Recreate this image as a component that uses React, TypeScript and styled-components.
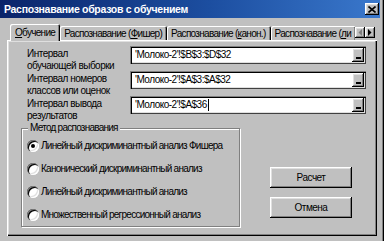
import React from 'react';
import styled, { createGlobalStyle } from 'styled-components';

const FACE = '#c0c0c0';

const GlobalStyle = createGlobalStyle`
  html, body {
    margin: 0;
    padding: 0;
    background: ${FACE};
  }
  body {
    font-family: "Liberation Sans", Arial, sans-serif;
    font-size: 10px;
    letter-spacing: -0.5px;
    color: #000;
  }
  * {
    box-sizing: border-box;
  }
`;

const raised = `
  box-shadow: inset -1px -1px #000, inset 1px 1px #fff, inset -2px -2px #808080, inset 2px 2px #dfdfdf;
`;

const Window = styled.div`
  width: 384px;
  height: 241px;
  overflow: hidden;
  display: flex;
  flex-direction: column;
  padding-right: 4px;
  background: ${FACE};
  box-shadow: inset -1px 0 #000, inset -2px 0 #808080;
`;

const TitleBar = styled.div`
  flex: none;
  height: 18px;
  display: flex;
  align-items: center;
  justify-content: space-between;
  padding: 0 1px 0 4px;
  background: linear-gradient(90deg, #0a246a 0%, #1c4ea0 55%, #3a78cc 100%);
`;

const Title = styled.span`
  color: #fff;
  font-weight: bold;
  font-size: 10.5px;
  letter-spacing: -0.3px;
`;

const CloseButton = styled.div`
  width: 14px;
  height: 12px;
  display: flex;
  align-items: center;
  justify-content: center;
  background: ${FACE};
  ${raised}
`;

const Body = styled.div`
  flex: 1;
  display: flex;
  flex-direction: column;
  padding: 6px 3px 5px 7px;
`;

const TabStrip = styled.div`
  flex: none;
  height: 17px;
  display: flex;
  align-items: flex-start;
  position: relative;
  z-index: 1;
`;

const TabList = styled.div`
  flex: 1;
  height: 17px;
  display: flex;
  align-items: flex-end;
  overflow: hidden;
  padding-left: 3px;
  letter-spacing: -0.7px;
`;

const Tab = styled.div<{ $active?: boolean }>`
  flex: none;
  height: ${({ $active }) => ($active ? '17px' : '14px')};
  margin-bottom: ${({ $active }) => ($active ? '0' : '1px')};
  padding: ${({ $active }) => ($active ? '0 5px 0 5px' : '1px 5px 0 4px')};
  display: flex;
  align-items: center;
  white-space: nowrap;
  background: ${FACE};
  border-radius: 2px 2px 0 0;
  box-shadow: inset 1px 1px #fff, inset -1px 0 #000, inset -2px 0 #808080;
`;

const Arrows = styled.div`
  flex: none;
  display: flex;
  margin: 3px 2px 0 0;
`;

const ArrowButton = styled.div`
  width: 10px;
  height: 11px;
  display: flex;
  align-items: center;
  justify-content: center;
  background: ${FACE};
  ${raised}
`;

const Panel = styled.div`
  flex: 1;
  margin-top: -1px;
  display: flex;
  flex-direction: column;
  padding: 6px 11px 0 14px;
  background: ${FACE};
  box-shadow: inset 1px 1px #fff, inset -1px -1px #000, inset -2px -2px #808080, inset 2px 2px #dfdfdf;
`;

const Fields = styled.div`
  display: grid;
  grid-template-columns: 103px 236px;
  grid-auto-rows: 25px;
  margin-left: 6px;
`;

const FieldLabel = styled.div`
  padding-top: 2px;
  line-height: 11.5px;
  white-space: pre-line;
`;

const RefEdit = styled.div`
  height: 18px;
  display: flex;
  padding: 2px;
  background: #fff;
  box-shadow: inset 1px 1px #808080, inset 2px 2px #000, inset -1px -1px #404040, inset -2px -2px #dfdfdf;
`;

const RefText = styled.div`
  flex: 1;
  display: flex;
  align-items: center;
  padding-left: 3px;
  line-height: 14px;
  letter-spacing: -0.5px;
  white-space: nowrap;
`;

const Caret = styled.span`
  display: inline-block;
  width: 1px;
  height: 12px;
  margin-left: 1px;
  background: #000;
`;

const RefButton = styled.div`
  width: 12px;
  height: 14px;
  display: flex;
  align-items: flex-end;
  justify-content: center;
  padding-bottom: 3px;
  background: ${FACE};
  ${raised}
`;

const RefGlyph = styled.span`
  width: 5px;
  height: 2px;
  background: #000;
`;

const BottomRow = styled.div`
  display: flex;
  margin-top: 7px;
`;

const GroupBox = styled.div`
  position: relative;
  width: 219px;
  height: 99px;
  border: 1px solid #808080;
  box-shadow: inset 1px 1px #fff, 1px 1px #fff;
  padding: 5px 0 0 5px;
  display: flex;
  flex-direction: column;
  letter-spacing: -0.75px;
`;

const GroupLegend = styled.span`
  position: absolute;
  top: -7px;
  left: 6px;
  padding: 0 2px;
  line-height: 12px;
  background: ${FACE};
`;

const RadioRow = styled.label`
  height: 23px;
  display: flex;
  align-items: center;
  gap: 2px;
  white-space: nowrap;
`;

const RadioCircle = styled.span<{ $checked?: boolean }>`
  position: relative;
  flex: none;
  width: 12px;
  height: 12px;
  border-radius: 50%;
  background: #fff;
  box-shadow: inset 1px 1px #808080, inset 2px 2px #000, inset -1px -1px #fff, inset -2px -2px #dfdfdf;

  &::after {
    content: '';
    display: ${({ $checked }) => ($checked ? 'block' : 'none')};
    position: absolute;
    left: 4px;
    top: 4px;
    width: 4px;
    height: 4px;
    border-radius: 50%;
    background: #000;
  }
`;

const ButtonColumn = styled.div`
  align-self: flex-end;
  display: flex;
  flex-direction: column;
  gap: 9px;
  margin: 0 0 9px 30px;
`;

const PushButton = styled.div`
  width: 82px;
  height: 21px;
  display: flex;
  align-items: center;
  justify-content: center;
  letter-spacing: -0.5px;
  background: ${FACE};
  ${raised}
`;

const fields = [
  { label: 'Интервал\nобучающей выборки', value: "'Молоко-2'!$B$3:$D$32" },
  { label: 'Интервал номеров\nклассов или оценок', value: "'Молоко-2'!$A$3:$A$32" },
  { label: 'Интервал вывода\nрезультатов', value: "'Молоко-2'!$A$36", caret: true },
];

const methods = [
  'Линейный дискриминантный анализ Фишера',
  'Канонический дискриминантный анализ',
  'Линейный дискриминантный анализ',
  'Множественный регрессионный анализ',
];

export default function App() {
  return (
    <>
      <GlobalStyle />
      <Window>
        <TitleBar>
          <Title>Распознавание образов с обучением</Title>
          <CloseButton>
            <svg width="8" height="7" viewBox="0 0 8 7">
              <path d="M0.5 0.5 L7.5 6.5 M7.5 0.5 L0.5 6.5" stroke="#000" strokeWidth="1.6" />
            </svg>
          </CloseButton>
        </TitleBar>
        <Body>
          <TabStrip>
            <TabList>
              <Tab $active>
                <span><u>О</u>бучение</span>
              </Tab>
              <Tab>
                <span>Распознавание (<u>Ф</u>ишер)</span>
              </Tab>
              <Tab>
                <span>Распознавание (<u>к</u>анон.)</span>
              </Tab>
              <Tab>
                <span>Распознавание (<u>л</u>и</span>
              </Tab>
            </TabList>
            <Arrows>
              <ArrowButton>
                <svg width="4" height="7" viewBox="0 0 4 7">
                  <path d="M4 0 L0.5 3.5 L4 7 Z" fill="#808080" />
                </svg>
              </ArrowButton>
              <ArrowButton>
                <svg width="4" height="7" viewBox="0 0 4 7">
                  <path d="M0 0 L3.5 3.5 L0 7 Z" fill="#000" />
                </svg>
              </ArrowButton>
            </Arrows>
          </TabStrip>
          <Panel>
            <Fields>
              {fields.map((f) => (
                <React.Fragment key={f.value}>
                  <FieldLabel>{f.label}</FieldLabel>
                  <RefEdit>
                    <RefText>
                      {f.value}
                      {f.caret && <Caret />}
                    </RefText>
                    <RefButton>
                      <RefGlyph />
                    </RefButton>
                  </RefEdit>
                </React.Fragment>
              ))}
            </Fields>
            <BottomRow>
              <GroupBox>
                <GroupLegend>Метод распознавания</GroupLegend>
                {methods.map((m, i) => (
                  <RadioRow key={m}>
                    <RadioCircle $checked={i === 0} />
                    {m}
                  </RadioRow>
                ))}
              </GroupBox>
              <ButtonColumn>
                <PushButton>Расчет</PushButton>
                <PushButton>Отмена</PushButton>
              </ButtonColumn>
            </BottomRow>
          </Panel>
        </Body>
      </Window>
    </>
  );
}
